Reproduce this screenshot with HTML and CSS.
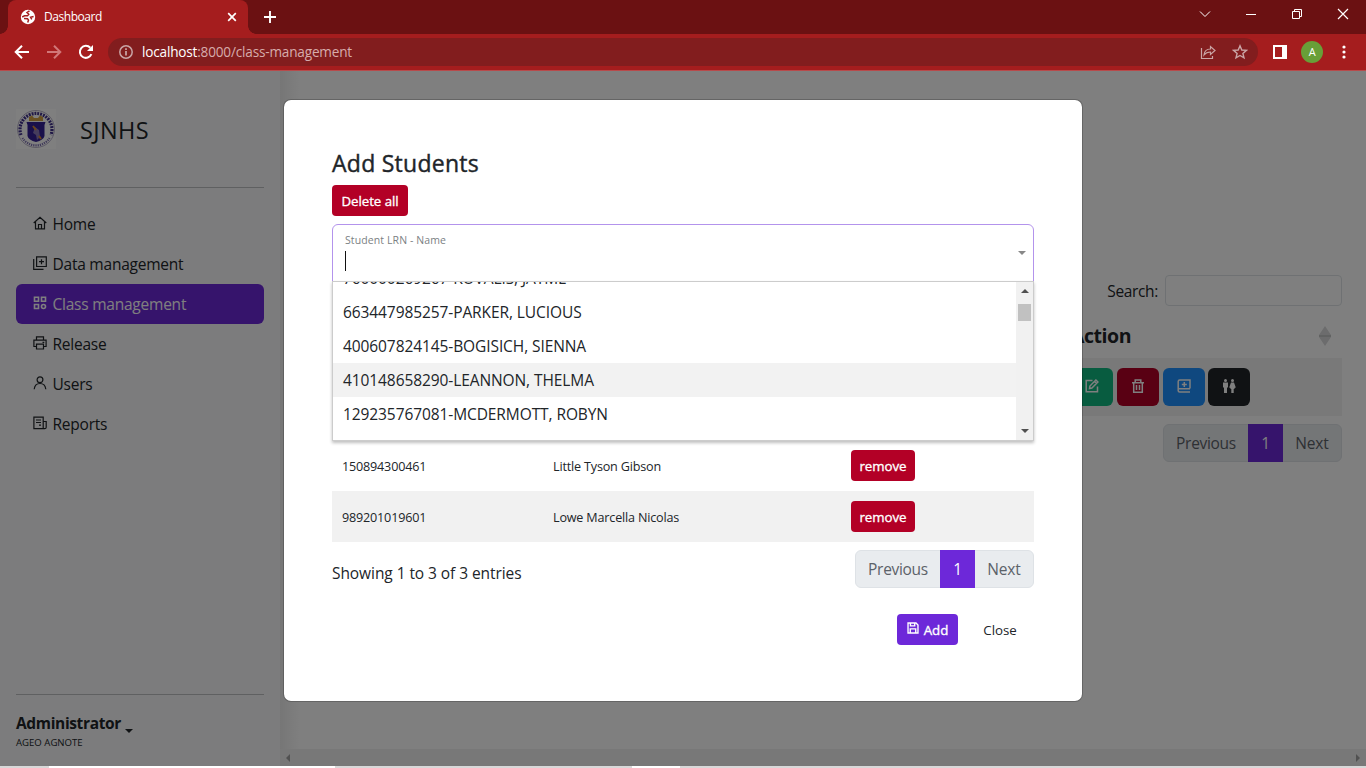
FILE: index.html
```html
<!DOCTYPE html>
<html lang="en">
<head>
<meta charset="utf-8">
<title>Dashboard</title>
<link rel="stylesheet" href="styles.css">
</head>
<body>
<div class="window">
  <header class="tabstrip">
    <div class="tab">
      <svg class="globe" width="16" height="16" viewBox="0 0 16 16"><circle cx="8" cy="8" r="7.200" fill="#fff"/><path d="M9.500 1.800L7 3.500l1.800 1.700-1.300 1.600H4.500L2.200 8M4 9.500l3.500.2 1 1.500-.8 2.300M13.600 7.500l-3 .8 1.200 2" fill="none" stroke="#a51d1e" stroke-width="1.500"/></svg>
      <span class="tab-title">Dashboard</span>
      <svg class="tab-close" width="10" height="10" viewBox="0 0 10 10"><path d="M1.200 1.200l7.600 7.600M8.800 1.200L1.200 8.800" stroke="#fff" stroke-width="1.700"/></svg>
    </div>
    <svg class="newtab" width="14" height="14" viewBox="0 0 14 14"><path d="M7 1v12M1 7h12" stroke="#fff" stroke-width="1.900"/></svg>
    <div class="wincontrols">
      <svg width="12" height="12" viewBox="0 0 12 12"><path d="M1 3.500l5 5 5-5" fill="none" stroke="#fff"/></svg>
      <svg width="12" height="12" viewBox="0 0 12 12"><path d="M1 6.500h10" stroke="#fff"/></svg>
      <svg width="12" height="12" viewBox="0 0 12 12"><path d="M1.500 3.500h7v7h-7zM3.500 3.500v-2h7v7h-2" fill="none" stroke="#fff"/></svg>
      <svg width="12" height="12" viewBox="0 0 12 12"><path d="M1 1l10 10M11 1L1 11" stroke="#fff" stroke-width="1.200"/></svg>
    </div>
  </header>
  <div class="toolbar">
    <svg width="16" height="16" viewBox="0 0 16 16"><path d="M15 8H2M8 1.700L1.700 8 8 14.300" fill="none" stroke="#fff" stroke-width="2"/></svg>
    <svg width="16" height="16" viewBox="0 0 16 16"><path d="M1 8h13M8 1.700L14.300 8 8 14.300" fill="none" stroke="#d17778" stroke-width="2"/></svg>
    <svg width="16" height="16" viewBox="0 0 16 16"><path d="M13.400 10.200A6 6 0 1 1 12.300 3.800" fill="none" stroke="#fff" stroke-width="2"/><path d="M15 1v6H9z" fill="#fff"/></svg>
    <div class="omnibox">
      <svg width="14" height="14" viewBox="0 0 14 14"><circle cx="7" cy="7" r="6.200" fill="none" stroke="#c9a5a6" stroke-width="1.500"/><path d="M7 6v4.500M7 3.300v1.600" stroke="#d0b0b1" stroke-width="1.600"/></svg>
      <span class="url"><b>localhost</b>:8000/class-management</span>
      <svg class="share" width="16" height="16" viewBox="0 0 16 16"><path d="M1.500 4v10.500h11V12" fill="none" stroke="#caa5a5" stroke-width="1.200"/><path d="M4 11c.4-4 3-6 6.500-6V2.500L15 6.500l-4.500 4V8C7.500 8 5.500 9 4 11z" fill="none" stroke="#caa5a5" stroke-width="1.200"/></svg>
      <svg class="star" width="16" height="16" viewBox="0 0 16 16"><path d="M8 1.800l1.800 4.200 4.600.4-3.500 3 1.100 4.500L8 11.500l-4 2.400 1.100-4.500-3.500-3 4.600-.4z" fill="none" stroke="#caa5a5" stroke-width="1.400"/></svg>
    </div>
    <svg class="panel" width="14" height="14" viewBox="0 0 14 14"><path d="M0 0h14v14H0zM2 2v10h7V2z" fill="#fff" fill-rule="evenodd"/></svg>
    <span class="avatar">A</span>
    <svg class="dots" width="4" height="14" viewBox="0 0 4 14"><g fill="#fff"><circle cx="2" cy="2" r="1.600"/><circle cx="2" cy="7" r="1.600"/><circle cx="2" cy="12" r="1.600"/></g></svg>
  </div>

  <div class="page">
    <aside class="sidebar">
      <div class="brand">
        <svg width="40" height="40" viewBox="0 0 40 40"><path fill="#fff" d="M0 0h40v40H0z"/><circle cx="20" cy="20" r="18.500" fill="none" stroke="#8c82a8" stroke-width=".6"/><path d="M5 26A16 16 0 1 1 35 26" fill="none" stroke="#40318c" stroke-width="3.200" stroke-dasharray="1.900 1"/><path d="M6.500 29A16 16 0 0 0 33.500 29" fill="none" stroke="#7d70b2" stroke-width="2.200" stroke-dasharray="1.200 1"/><path d="M10.500 13h19l-1 3v11q-1 4-8.500 6-7.500-2-8.500-6V16z" fill="#342096"/><path d="M13 8l3-1.500L18 9h4l2-2.500L27 8v4H13z" fill="#d5a343"/><path d="M19 18l4 3 1 7-3 3-1-5-3-2z" fill="#8a78b8"/><path d="M17 17l3 4M23 27l2 3" stroke="#d78a35" stroke-width="2"/></svg>
        <span>SJNHS</span>
      </div>
      <hr class="rule">
      <nav class="nav">
        <a class="nav-item"><svg class="ico" viewBox="0 0 14 14"><path d="M.7 7L7 1.200 13.300 7M2.500 5.800v7h9v-7M5.500 12.500V8.500h3v4"/></svg><span>Home</span></a>
        <a class="nav-item"><svg class="ico" viewBox="0 0 14 14"><path d="M3.600.8h9.700v9.700H3.600zM.7 3v10.300h9.800M8.500 3.200v5M6 5.700h5"/></svg><span>Data management</span></a>
        <a class="nav-item active"><svg class="ico" viewBox="0 0 14 14"><path d="M1.500 1.200h4v4h-4zM8.500 1.200h4v4h-4zM1.500 8.500h4v4h-4z"/><circle cx="10.500" cy="10.500" r="2"/></svg><span>Class management</span></a>
        <a class="nav-item"><svg class="ico" viewBox="0 0 14 14"><path d="M3.500 4V.9h7V4M3.500 10.500H.9V4.200h12.200v6.300h-2.600M3.500 8.200h7v4.800h-7zM9.500 6.300h1.800"/></svg><span>Release</span></a>
        <a class="nav-item"><svg class="ico" viewBox="0 0 14 14"><circle cx="7" cy="3.800" r="2.900"/><path d="M1.200 13.300c.4-3.600 2.500-5.800 5.800-5.800s5.400 2.200 5.800 5.800"/></svg><span>Users</span></a>
        <a class="nav-item"><svg class="ico" viewBox="0 0 14 14"><path d="M.9 1.200h9.300v11.500H.9zM10.200 5.500h3v5.700q0 1.500-1.500 1.500H9M3 4h5M3 6.500h5M6 9.200h2"/></svg><span>Reports</span></a>
      </nav>
      <hr class="rule foot">
      <div class="account"><strong>Administrator</strong><i class="caret"></i></div>
      <div class="account-name">AGEO AGNOTE</div>
    </aside>
    <main class="content">
      <div class="main-body">
        <label class="search"><span>Search:</span><i class="search-box"></i></label>
        <div class="thead"><span>Action</span><svg width="12" height="20" viewBox="0 0 12 20"><path d="M6 0l6 9H0z" fill="#d8d9da"/><path d="M0 11h12l-6 9z" fill="#d8d9da"/><path d="M0 9h12v2H0z" fill="#c3c4c5"/></svg></div>
        <div class="trow">
          <span class="act green"><svg class="ico" viewBox="0 0 14 14"><path d="M7.500 1.500H1.200v11.300h11.300V7.500M4.500 9.500l.4-2.500 6-6 2 2-6 6zM9.500 2.500l2 2"/></svg></span>
          <span class="act red"><svg class="ico" viewBox="0 0 14 14"><path d="M1 3.700h12M4.200 3.500V1.100h5.600v2.400M2.700 4v9.200h8.600V4M5.500 6v5M8.500 6v5"/></svg></span>
          <span class="act blue"><svg class="ico" viewBox="0 0 14 14"><path d="M13 9.500V1H2.700Q1.200 1 1.200 2.500v9.300Q1.200 13 2.700 13H13M1.500 9.800H13M7.300 3v5M4.800 5.500h5"/></svg></span>
          <span class="act black"><svg class="ico people" viewBox="0 0 14 14"><circle cx="3.500" cy="1.500" r="1.500"/><circle cx="10.500" cy="1.500" r="1.500"/><path d="M1 3.500h5v5H5V14H2V8.500H1zM9 3.500h3l1.800 5-1.300.5V10h-.8v4H9.300v-4h-.8V9l-1.300-.5z"/></svg></span>
        </div>
        <div class="pager"><span class="prev">Previous</span><span class="cur">1</span><span class="next">Next</span></div>
      </div>
      <div class="hscroll"><i class="left"></i><i class="right"></i></div>
    </main>
    <div class="backdrop"></div>
    <section class="modal">
      <h2>Add Students</h2>
      <button class="btn danger del">Delete all</button>
      <div class="select">
        <span class="select-label">Student LRN - Name</span>
        <i class="cursor"></i><i class="caret gray"></i>
        <div class="menu">
          <div class="options">
            <div class="opt">760000269267-KOVALIS, JAYME</div>
            <div class="opt">663447985257-PARKER, LUCIOUS</div>
            <div class="opt">400607824145-BOGISICH, SIENNA</div>
            <div class="opt hover">410148658290-LEANNON, THELMA</div>
            <div class="opt">129235767081-MCDERMOTT, ROBYN</div>
          </div>
          <div class="vscroll"><i class="up"></i><i class="thumb"></i><i class="down"></i></div>
        </div>
      </div>
      <div class="rows">
        <div class="row"><span>150894300461</span><span>Little Tyson Gibson</span><button class="btn danger rem">remove</button></div>
        <div class="row odd"><span>989201019601</span><span>Lowe Marcella Nicolas</span><button class="btn danger rem">remove</button></div>
      </div>
      <div class="summary"><span class="showing">Showing 1 to 3 of 3 entries</span>
        <div class="pager"><span class="prev">Previous</span><span class="cur">1</span><span class="next">Next</span></div></div>
      <div class="actions">
        <button class="btn add"><svg class="ico" viewBox="0 0 14 14"><path d="M1.200 1.200h9.300l2.300 2.300v9.300H1.200zM4 1.500v3h5v-3M3.800 12.500V8h6.400v4.500"/></svg><span>Add</span></button>
        <button class="btn close">Close</button>
      </div>
    </section>
  </div>
  <footer class="edge"><i></i><i></i></footer>
</div>
</body>
</html>
```
FILE: styles.css
```css
* { box-sizing: border-box; }
body { margin: 0; overflow: hidden; font: 15.5px/24px "Open Sans", "Noto Sans", sans-serif; letter-spacing: -.23px; color: #212529; }
svg { display: block; flex: none; }
.window { width: 1366px; height: 768px; display: flex; flex-direction: column; }
.tabstrip { height: 34px; flex: none; background: #6b1112; display: flex; align-items: center; padding-left: 8px; }
.tab { position: relative; width: 240px; height: 34px; background: #a51d1e; border-radius: 8px 8px 0 0; display: flex; align-items: center; padding: 0 11px 0 12px; color: #fff; }
.tab::before, .tab::after { content: ""; position: absolute; bottom: 0; width: 8px; height: 8px; }
.tab::before { left: -8px; background: radial-gradient(circle at 0 0, transparent 7.500px, #a51d1e 8px); }
.tab::after { right: -8px; background: radial-gradient(circle at 100% 0, transparent 7.500px, #a51d1e 8px); }
.tab-title { flex: 1; margin-left: 8px; font-size: 12px; letter-spacing: -.45px; line-height: 16px; }
.newtab { margin-left: 15px; }
.wincontrols { margin-left: auto; display: flex; gap: 34px; padding: 0 17px 6px 0; }
.toolbar { height: 37px; flex: none; background: #a51d1e; border-bottom: 1px solid #b84a4b; display: flex; align-items: center; padding: 0 19px 0 14px; }
.toolbar > svg + svg { margin-left: 16px; }
.omnibox { margin-left: 14px; width: 1150px; height: 28px; border-radius: 14px; background: #821d1e; display: flex; align-items: center; padding: 0 10px 0 11px; }
.url { flex: 1; margin-left: 9px; color: #d6acac; font-size: 13.6px; letter-spacing: -.19px; }
.url b { color: #fff; font-weight: 400; }
.star { margin-left: 16px; }
.panel { margin-left: 15px; }
.avatar { width: 22px; height: 22px; margin: 0 19px 0 14px; border-radius: 50%; background: #689f38; color: #fff; font-size: 11px; line-height: 22px; text-align: center; }
.page { position: relative; flex: 1; min-height: 0; display: flex; background: #fff; }
.sidebar { width: 280px; padding: 38px 16px 0; background: #f8f9fa; display: flex; flex-direction: column; }
.brand { height: 40px; display: flex; align-items: center; gap: 24px; font-size: 23.5px; letter-spacing: .4px; }
.brand span { padding-top: 2px; }
.rule { margin: 38px 0 16px; width: 100%; height: 1px; border: 0; background: #bfc1c2; }
.rule.foot { margin: auto 0 16px; }
.nav-item { height: 40px; border-radius: 6px; padding-left: 17px; display: flex; align-items: center; gap: 5.500px; }
.nav-item .ico { margin-top: -3px; }
.active { background: #6d28d9; color: #fff; }
.ico { width: 14px; height: 14px; fill: none; stroke: currentColor; stroke-width: 1.2; }
.active .ico { stroke-width: 1.6; }
.account { display: flex; align-items: center; height: 24px; }
.account strong { font-weight: 700; letter-spacing: -.35px; }
.caret { width: 0; height: 0; border: 4px solid transparent; border-top-color: currentColor; border-bottom: 0; }
.account .caret { margin: 15px 0 0 4px; }
.account-name { font-size: 9.6px; letter-spacing: 0; line-height: 16px; margin-bottom: 15px; }
.content { flex: 1; display: flex; flex-direction: column; background: linear-gradient(90deg, #ededed, #fff 20px); }
.main-body { flex: 1; padding: 204px 24px 0; display: flex; flex-direction: column; align-items: flex-end; }
.search { display: flex; gap: 7px; align-items: center; height: 31px; letter-spacing: -.35px; }
.search-box { width: 177px; height: 31px; border: 1px solid #dee2e6; border-radius: 4px; }
.thead { width: 286px; height: 52px; padding: 8px 11px 0 15px; display: flex; justify-content: space-between; align-items: center; font-size: 19.5px; font-weight: 700; letter-spacing: -.45px; }
.trow { width: 286px; height: 58px; padding-left: 15px; background: #f2f2f2; display: flex; align-items: center; gap: 4px; }
.act { width: 42px; height: 38px; border-radius: 6px; color: #fff; display: flex; align-items: center; justify-content: center; padding-bottom: 3px; }
.act .ico { stroke-width: 1.5; }
.act .people { fill: #fff; stroke: none; }
.green { background: #10b981; } .red { background: #b30026; } .blue { background: #1e90ff; } .black { background: #212529; margin-left: -1px; }
.pager { width: 179px; height: 38px; flex: none; margin-top: 8px; display: flex; background: #e9ecef; border: 1px solid #dee2e6; border-radius: 6px; color: #5c6269; line-height: 36px; text-align: center; }
.prev { width: 84px; letter-spacing: -.3px; } .next { width: 58px; letter-spacing: -.1px; }
.cur { width: 35px; height: 38px; margin-top: -1px; line-height: 38px; background: #6d28d9; color: #fff; }
.hscroll { height: 17px; background: #f1f1f1; display: flex; justify-content: space-between; align-items: center; padding: 0 6px; }
.left, .right { border: 4px solid transparent; }
.left { border-right-color: #a3a3a3; border-left: 0; } .right { border-left-color: #a3a3a3; border-right: 0; }
.backdrop { position: absolute; inset: 0; background: rgba(0,0,0,.5); }
.modal { position: absolute; left: 283px; top: 28px; width: 800px; height: 603px; padding: 48px; border: 1px solid rgba(0,0,0,.2); border-radius: 8px; background: #fff; background-clip: padding-box; }
h2 { margin: 0; height: 37px; font-size: 23px; font-weight: 400; line-height: 31px; letter-spacing: .26px; -webkit-text-stroke: .4px; }
.btn { display: block; height: 31px; padding: 0; border: 0; border-radius: 4px; color: #fff; font: 400 13.3px/32px "Open Sans", sans-serif; letter-spacing: -.05px; text-align: center; -webkit-text-stroke: .35px; }
.danger { background: #b30026; }
.del { width: 76px; }
.select { position: relative; width: 702px; height: 58px; margin-top: 8px; border: 1px solid #b393ec; border-radius: 6px 6px 0 0; }
.select-label { position: absolute; left: 12px; top: 8px; font-size: 10.5px; line-height: 15px; letter-spacing: .1px; color: #7b7f83; }
.cursor { position: absolute; left: 12px; top: 26px; width: 1px; height: 20px; background: #111; }
.select .gray { position: absolute; right: 7px; top: 26px; color: #888; }
.menu { position: absolute; left: -1px; top: 56px; width: 702px; height: 160px; border: 1px solid #ccc; background: #fff; box-shadow: 0 2px 3px rgba(0,0,0,.25); display: flex; overflow: hidden; }
.options { flex: 1; margin-top: -21px; letter-spacing: -.09px; }
.opt { height: 34px; padding-left: 10px; line-height: 34px; }
.hover { background: #f2f2f2; }
.vscroll { width: 17px; background: #f1f1f1; display: flex; flex-direction: column; align-items: center; padding: 7px 0; }
.up, .down { border: 4px solid transparent; }
.up { border-bottom-color: #505050; border-top: 0; } .down { border-top-color: #505050; border-bottom: 0; margin-top: auto; }
.thumb { width: 13px; height: 17px; margin-top: 11px; background: #c1c1c1; }
.rows { margin-top: 158px; font-size: 12.6px; letter-spacing: -.18px; }
.row { height: 51px; padding: 0 10px; display: grid; grid-template-columns: 211px 298px 64px; align-items: center; }
.row span { padding-top: 2px; }
.odd { background: #f1f1f1; }
.summary { display: flex; justify-content: space-between; }
.showing { margin-top: 19px; letter-spacing: -.07px; }
.actions { display: flex; justify-content: flex-end; margin-top: 26px; padding-right: 9px; }
.add { width: 61px; background: #6d28d9; display: flex; align-items: center; justify-content: center; gap: 5px; }
.add .ico { width: 12px; height: 12px; margin-top: -3px; stroke-width: 1.6; }
.close { width: 50px; margin-left: 17px; background: #fff; color: #212529; -webkit-text-stroke: 0; }
.edge { height: 2px; flex: none; background: #d8d8d8; display: flex; }
.edge i { width: 286px; margin-left: 49px; background: #fff; }
.edge i + i { width: 48px; margin-left: 297px; }
```
